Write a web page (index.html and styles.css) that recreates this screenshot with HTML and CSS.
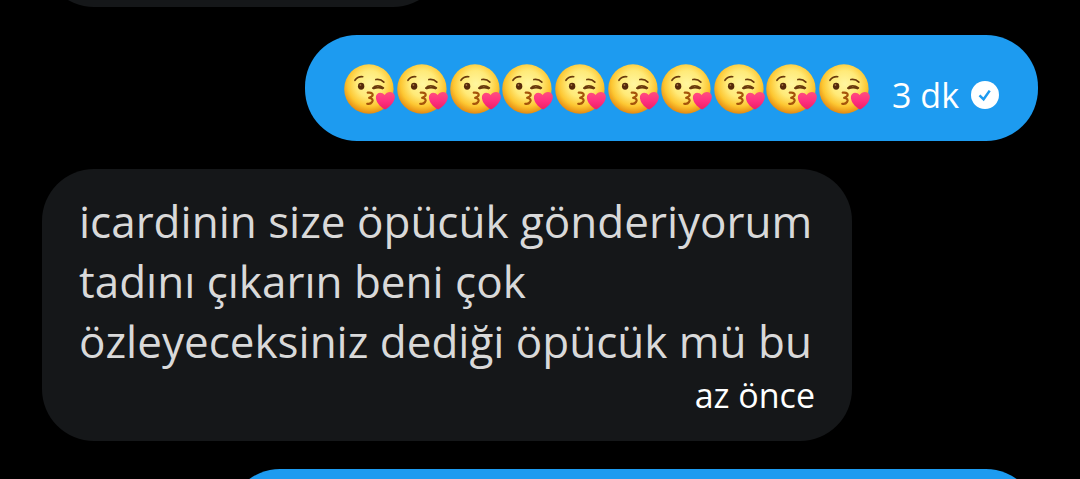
FILE: index.html
```html
<!DOCTYPE html>
<html lang="tr">

<head>
    <meta charset="UTF-8">
    <meta name="viewport" content="width=device-width, initial-scale=1.0">
    <title>Mesajlar</title>
    <link rel="stylesheet" href="styles.css">
</head>

<body>
    <!-- shared emoji drawing, reused by every .emoji below -->
    <svg class="sprite" aria-hidden="true">
        <defs>
            <radialGradient id="face" cx="52%" cy="40%" r="60%">
                <stop offset="0" stop-color="#fff6a0" />
                <stop offset="0.45" stop-color="#ffea78" />
                <stop offset="0.75" stop-color="#fdc732" />
                <stop offset="1" stop-color="#e58a10" />
            </radialGradient>
            <linearGradient id="heart" x1="0" y1="0" x2="0" y2="1">
                <stop offset="0" stop-color="#ff4f7c" />
                <stop offset="0.5" stop-color="#ff3080" />
                <stop offset="1" stop-color="#ee1f63" />
            </linearGradient>
            <symbol id="kiss" viewBox="0 0 53 50">
                <circle cx="25" cy="25" r="24.800" fill="url(#face)" />
                <g fill="none" stroke="#6a3a0c" stroke-linecap="round" stroke-linejoin="round">
                    <path d="M11 16.200C13 13.400 15.500 12.400 18.800 12.700" stroke-width="1.700" />
                    <path d="M32 15.500C35 15 38 16 40 18" stroke-width="1.700" />
                    <path d="M29 24C31.500 21.200 36 21.200 39.500 24M30 24.500C33 23.300 36 23.500 38.500 24.500" stroke-width="1.800" />
                    <path d="M23.800 28.700C28 28 30 30.500 28 32.300C27 33.200 25.800 33.600 25.200 34C28.500 34 29.500 36.300 28.200 38C27.200 39.600 25.200 40.300 23.300 39.800" stroke="#a5540a" stroke-width="2.200" />
                </g>
                <ellipse cx="17.200" cy="22.200" rx="3.200" ry="3.500" fill="#55290a" />
                <circle cx="16.500" cy="21" r="0.900" fill="#a0703a" />
                <path d="M41.200 45.700C36 42.700 32 38 32 33C32.200 28.500 37.500 27 40.800 31C43.500 26.500 50.200 27 51 32C51.400 37.500 46.500 42.700 41.200 45.700Z" fill="url(#heart)" />
            </symbol>
        </defs>
    </svg>

    <main class="chat">
        <div class="bubble bubble-in bubble-previous"></div>

        <article class="bubble bubble-out bubble-emoji">
            <div class="emoji-row" role="img" aria-label="Öpücük">
                <svg class="emoji"><use href="#kiss" /></svg>
                <svg class="emoji"><use href="#kiss" /></svg>
                <svg class="emoji"><use href="#kiss" /></svg>
                <svg class="emoji"><use href="#kiss" /></svg>
                <svg class="emoji"><use href="#kiss" /></svg>
                <svg class="emoji"><use href="#kiss" /></svg>
                <svg class="emoji"><use href="#kiss" /></svg>
                <svg class="emoji"><use href="#kiss" /></svg>
                <svg class="emoji"><use href="#kiss" /></svg>
                <svg class="emoji"><use href="#kiss" /></svg>
            </div>
            <div class="meta">
                <time>3 dk</time>
                <svg class="sent-icon" viewBox="0 0 28 28" role="img" aria-label="Gönderildi">
                    <circle cx="14" cy="14" r="14" fill="#fff" />
                    <path d="M8.500 14.300L12.600 18.300L18.700 9.600" fill="none" stroke="#1d9bf0" stroke-width="2.500" />
                </svg>
            </div>
        </article>

        <article class="bubble bubble-in">
            <p class="text">icardinin size öpücük gönderiyorum tadını çıkarın beni çok özleyeceksiniz dediği öpücük mü bu</p>
            <div class="meta">
                <time>az önce</time>
            </div>
        </article>

        <div class="bubble bubble-out bubble-next"></div>
    </main>
</body>

</html>
```
FILE: styles.css
```css
* {
    box-sizing: border-box;
}

body {
    margin: 0;
    background-color: #000000;
    color: #ffffff;
    font-family: "Open Sans", sans-serif;
}

.sprite {
    position: absolute;
    width: 0;
    height: 0;
}

.chat {
    display: flex;
    flex-direction: column;
    gap: 28px;
    height: 100vh;
    padding: 0 42px;
    overflow: hidden;
}

.bubble {
    flex-shrink: 0;
    min-height: 106px;
    padding: 22px 37px;
    border-radius: 52px;
}

.bubble-in {
    align-self: flex-start;
    max-width: 810px;
    background-color: #151719;
}

.bubble-out {
    align-self: flex-end;
    background-color: #1d9bf0;
}

/* neighbours scrolled mostly out of view */
.bubble-previous {
    width: 403px;
    margin-top: -99px;
}

.bubble-next {
    width: 810px;
}

.bubble-emoji {
    display: flex;
    align-items: flex-end;
    gap: 20px;
    padding: 28px 39px 22px;
}

.emoji-row {
    display: flex;
    width: 528px;
    padding-bottom: 5px;
}

.emoji {
    flex: 1;
    min-width: 0;
    height: 50px;
}

.text {
    margin: 0;
    color: #d9d9d9;
    font-size: 44px;
    line-height: 60px;
}

.meta {
    display: flex;
    justify-content: flex-end;
    align-items: center;
    gap: 12px;
    font-size: 34px;
    line-height: 48px;
}

.sent-icon {
    width: 28px;
    height: 28px;
}
```
